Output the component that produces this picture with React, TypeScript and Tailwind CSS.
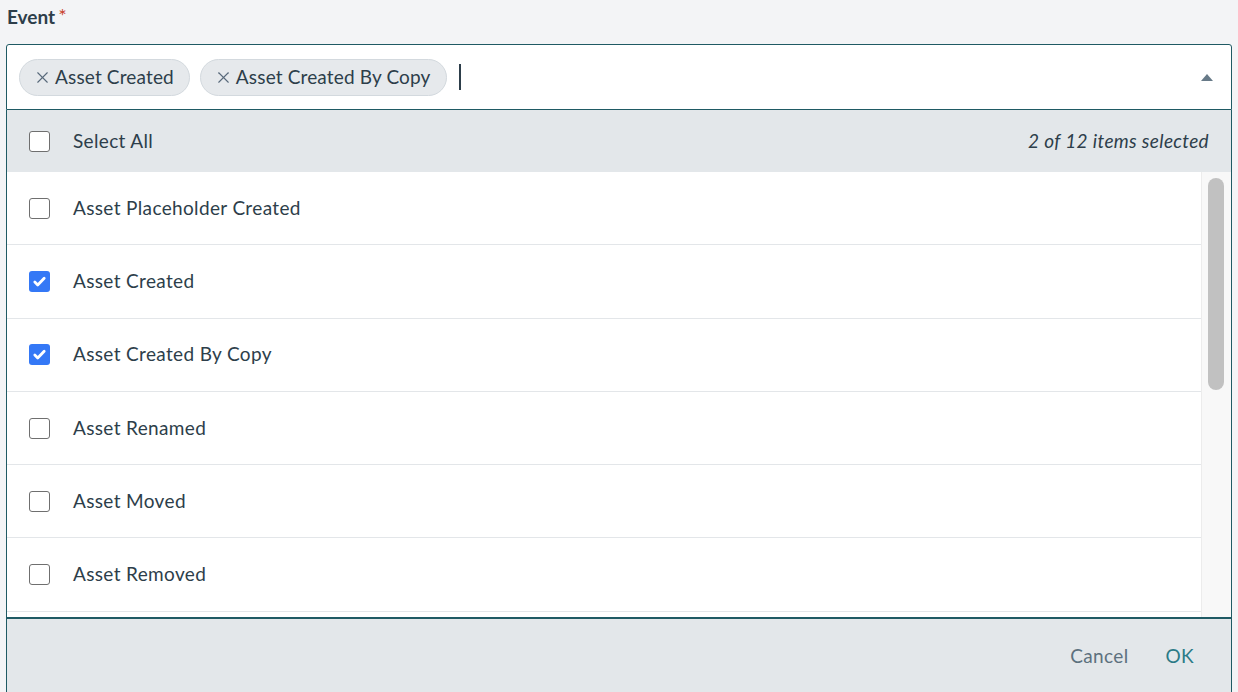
import { X } from "lucide-react";

const items = [
  { label: "Asset Placeholder Created", checked: false },
  { label: "Asset Created", checked: true },
  { label: "Asset Created By Copy", checked: true },
  { label: "Asset Renamed", checked: false },
  { label: "Asset Moved", checked: false },
  { label: "Asset Removed", checked: false },
];

function Checkbox({ checked }: { checked: boolean }) {
  if (checked) {
    return (
      <span className="flex h-[21px] w-[21px] shrink-0 items-center justify-center rounded-[3px] bg-[#3478f6]">
        <svg viewBox="0 0 16 16" className="h-[15px] w-[15px]">
          <path d="M3 8.6l3.1 3.1L13 4.6" fill="none" stroke="#fff" strokeWidth="3" strokeLinecap="round" strokeLinejoin="round" />
        </svg>
      </span>
    );
  }
  return <span className="h-[21px] w-[21px] shrink-0 rounded-[3px] border-[1.5px] border-[#6f6f6f] bg-white" />;
}

function Chip({ label }: { label: string }) {
  return (
    <span className="flex h-[37px] items-center gap-[3px] rounded-full border border-[#d3d9de] bg-[#e6e9ec] pl-[13px] pr-[15px] text-[19px] tracking-[0.15px] text-[#2d3e4a]">
      <X className="h-[19px] w-[19px] text-[#58697a]" strokeWidth={1.4} />
      {label}
    </span>
  );
}

export default function App() {
  return (
    <div className="h-[692px] overflow-hidden bg-[#f3f4f6] font-['Lato','Noto_Sans',sans-serif] text-[#2d3e4a]">
      <div className="flex h-[34px] items-center pl-[7px] text-[19px] font-bold">
        Event<span className="ml-[3px] -mt-[5px] text-[20px] font-normal text-[#c8412d]">*</span>
      </div>
      <div className="ml-[6px] mr-[6px] mt-[10px]">
        <div className="flex h-[66px] items-center gap-[10px] rounded-t-[3px] border border-[#1f5a64] bg-white pl-[12px] pr-[18px]">
          <Chip label="Asset Created" />
          <Chip label="Asset Created By Copy" />
          <span className="ml-[2px] h-[26px] w-[2px] bg-[#2d3e4a]" />
          <span className="ml-auto h-0 w-0 border-x-[6px] border-b-[7px] border-x-transparent border-b-[#677a88]" />
        </div>
        <div className="border-x border-[#1f5a64] bg-white text-[19px] tracking-[0.35px]">
          <div className="flex h-[62px] items-center bg-[#e3e7ea] pl-[22px] pr-[22px]">
            <Checkbox checked={false} />
            <span className="ml-[23px]">Select All</span>
            <span className="ml-auto italic">2 of 12 items selected</span>
          </div>
          <div className="flex h-[445px] overflow-hidden">
            <div className="flex-1">
              {items.map((it) => (
                <div
                  key={it.label}
                  className="flex h-[73.3px] items-center border-b border-[#e3e6e9] pl-[22px]"
                >
                  <Checkbox checked={it.checked} />
                  <span className="ml-[23px]">{it.label}</span>
                </div>
              ))}
            </div>
            <div className="w-[30px] border-l border-[#ececec] bg-[#f8f8f8] pl-[6px] pt-[6px]">
              <div className="h-[212px] w-[16px] rounded-full bg-[#c1c1c1]" />
            </div>
          </div>
          <div className="flex h-[76px] items-center justify-end gap-[37px] border-t-2 border-[#1f5a64] bg-[#e3e7ea] pr-[37px]">
            <span className="text-[#5d717e]">Cancel</span>
            <span className="text-[#2b7b87]">OK</span>
          </div>
        </div>
      </div>
    </div>
  );
}
